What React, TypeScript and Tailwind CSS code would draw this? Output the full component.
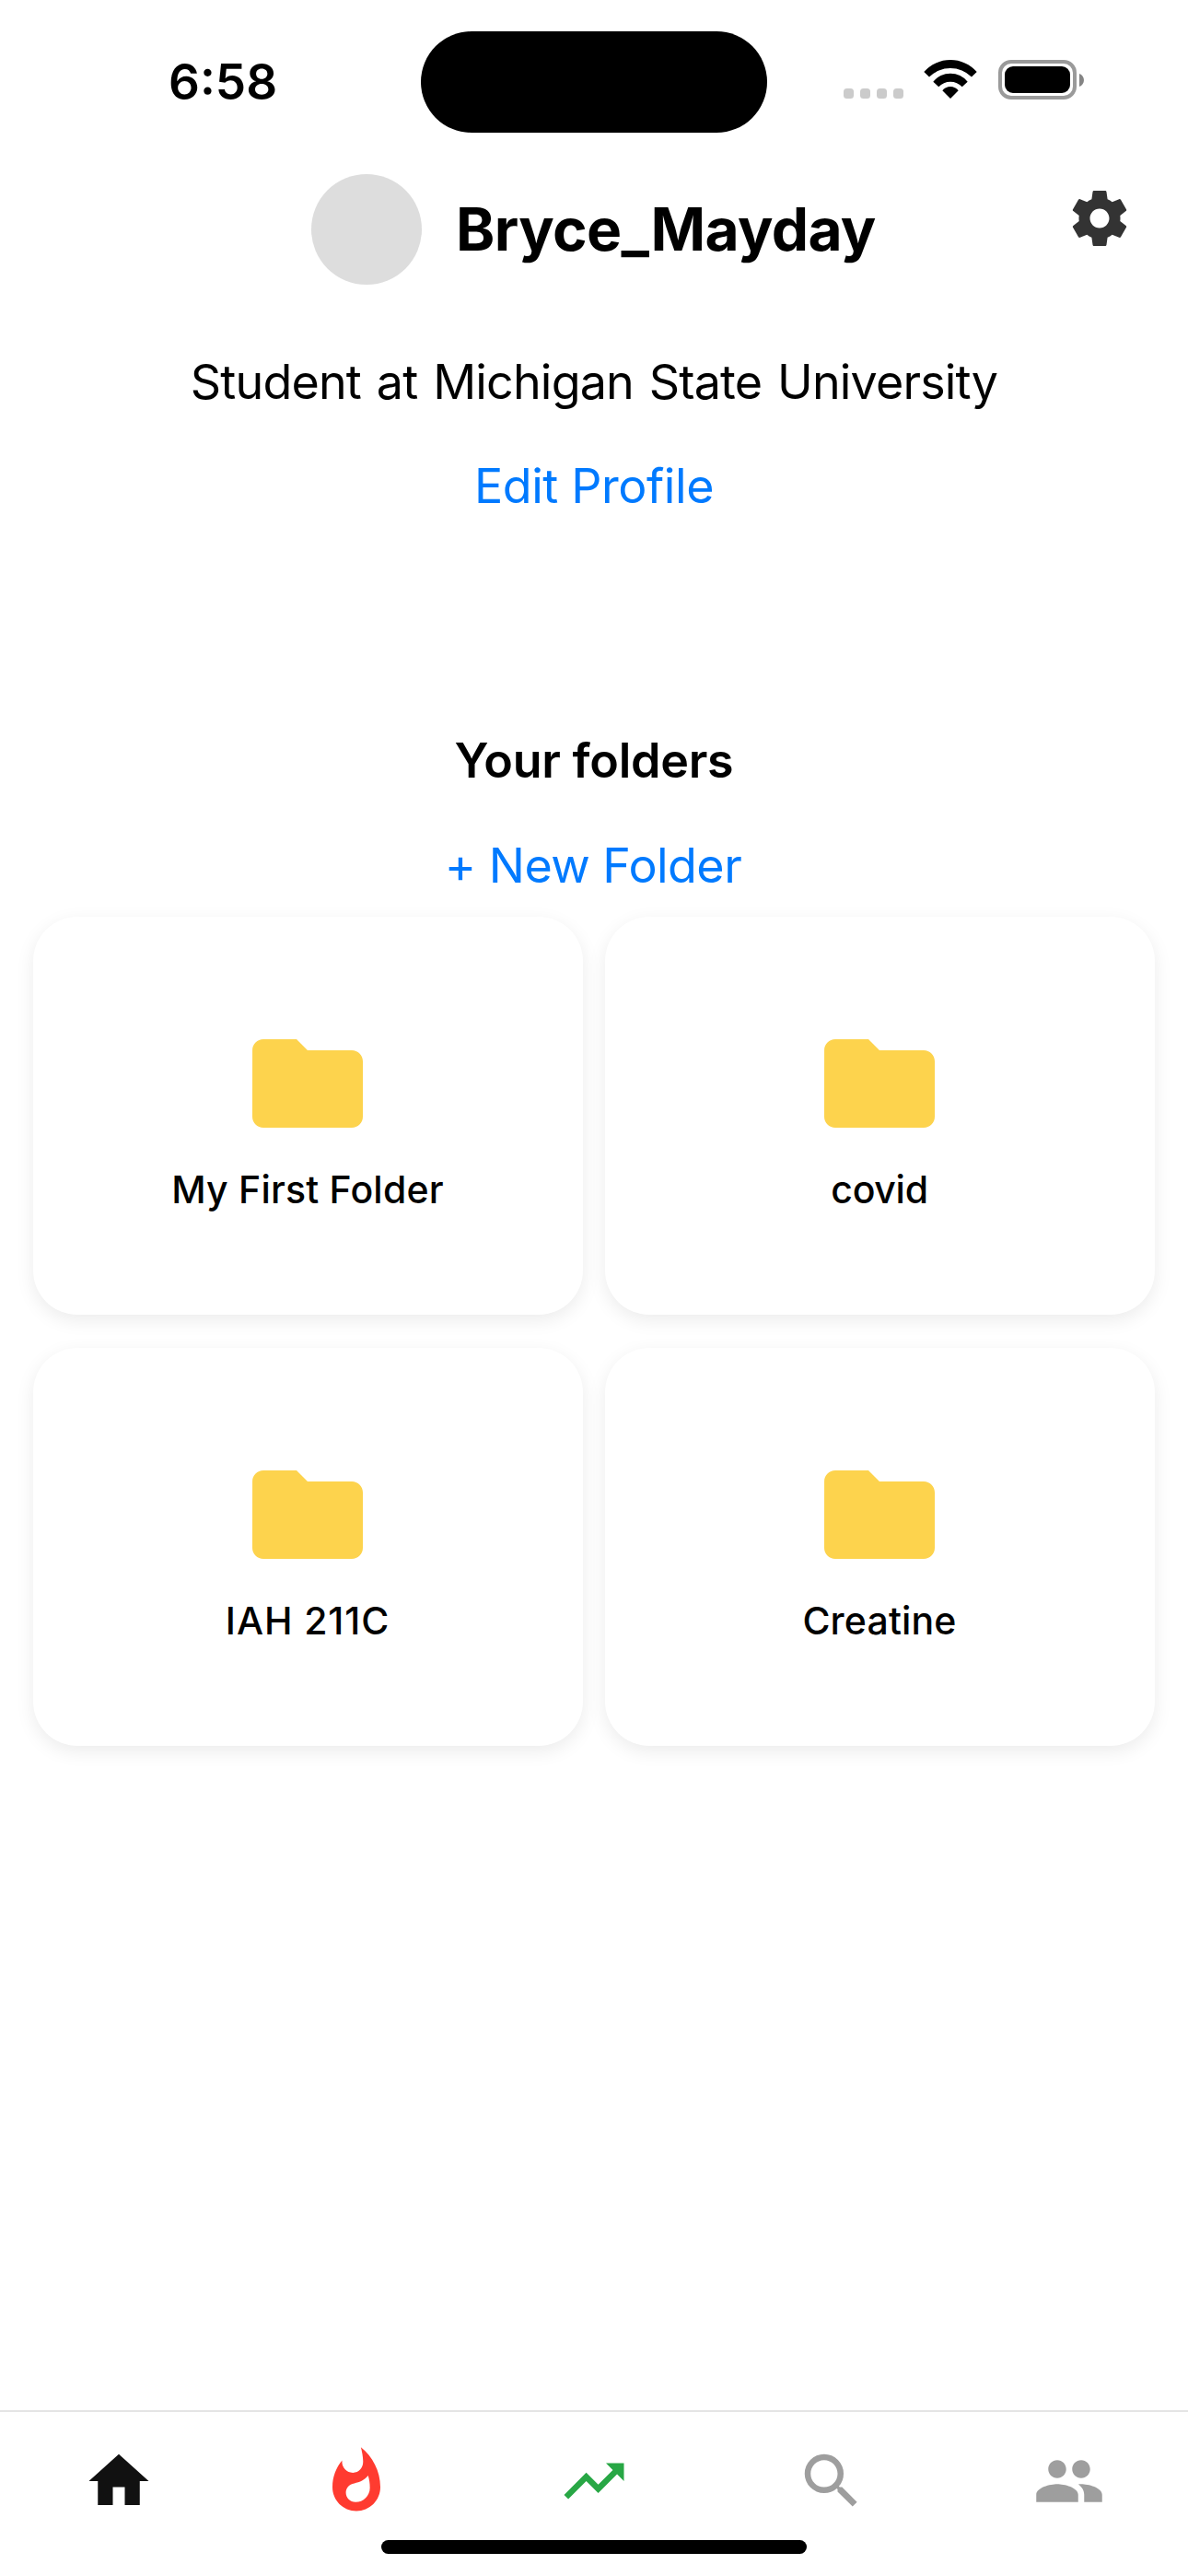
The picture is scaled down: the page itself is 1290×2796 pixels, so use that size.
import type { ReactNode } from 'react';
import { MdFolder, MdHome, MdPeople, MdSearch, MdTrendingUp, MdWhatshot } from 'react-icons/md';

const folders = [
  { name: 'My First Folder', tracking: 'tracking-[0.2px]' },
  { name: 'covid', tracking: 'tracking-[-0.3px]' },
  { name: 'IAH 211C', tracking: 'tracking-[0.9px]' },
  { name: 'Creatine', tracking: 'tracking-[0.16px]' },
];

function WifiIcon() {
  return (
    <svg className="h-[42px] w-[58px]" viewBox="0 0 57.4 42" fill="#000">
      <path d="M0 13A38.2 38.2 0 0 1 57.4 13L51.7 18.5A32.6 32.6 0 0 0 5.7 18.5Z" />
      <path d="M10 23.7A23.9 23.9 0 0 1 47.4 23.7L41.4 29.3A17.2 17.2 0 0 0 16 29.3Z" />
      <path d="M20 33.3A11 11 0 0 1 37.4 33.3L28.7 42Z" />
    </svg>
  );
}

function BatteryIcon() {
  return (
    <div className="flex items-center">
      <div className="h-[43px] w-[85px] rounded-[14px] border-4 border-[#9a9a9a] p-[3px]">
        <div className="h-[29px] w-[71px] rounded-[9px] bg-black" />
      </div>
      <svg className="ml-[3px] h-[14px] w-[5px]" viewBox="0 0 5 14" fill="#848484">
        <path d="M0 0C3 1 5 4 5 7S3 13 0 14Z" />
      </svg>
    </div>
  );
}

function SettingsIcon() {
  return (
    <svg className="size-[72px]" viewBox="0 0 24 24" fill="#333">
      <path d="M19.43 12.98c.04-.32.07-.64.07-.98s-.03-.66-.07-.98l2.11-1.65c.19-.15.24-.42.12-.64l-2-3.46c-.12-.22-.39-.3-.61-.22l-2.49 1c-.52-.4-1.08-.73-1.69-.98l-.38-2.65C14.46 2.18 14.25 2 14 2h-4c-.25 0-.46.18-.49.42l-.38 2.65c-.61.25-1.17.59-1.69.98l-2.49-1c-.23-.09-.49 0-.61.22l-2 3.46c-.13.22-.07.49.12.64l2.11 1.65c-.04.32-.07.65-.07.98s.03.66.07.98l-2.11 1.65c-.19.15-.24.42-.12.64l2 3.46c.12.22.39.3.61.22l2.49-1c.52.4 1.08.73 1.69.98l.38 2.65c.03.24.24.42.49.42h4c.25 0 .46-.18.49-.42l.38-2.65c.61-.25 1.17-.59 1.69-.98l2.49 1c.23.09.49 0 .61-.22l2-3.46c.12-.22.07-.49-.12-.64l-2.11-1.65zM12 15.5c-1.93 0-3.5-1.57-3.5-3.5s1.57-3.5 3.5-3.5 3.5 1.57 3.5 3.5-1.57 3.5-3.5 3.5z" />
    </svg>
  );
}

function StatusBar() {
  return (
    <header className="flex h-[189px] shrink-0 items-start">
      <div className="w-[457px] pt-[59px] pl-[183px] text-[53px] leading-[60px] font-semibold">6:58</div>
      <div className="mt-[34px] h-[110px] w-[376px] rounded-full bg-black" />
      <div className="flex pt-[65px] pl-[83px]">
        <div className="mt-[31px] flex gap-[7px]">
          {[0, 1, 2, 3].map((i) => (
            <div key={i} className="size-[11px] rounded-[3.5px] bg-[#cbcbcb]" />
          ))}
        </div>
        <div className="ml-[22px]">
          <WifiIcon />
        </div>
        <div className="ml-[23px]">
          <BatteryIcon />
        </div>
      </div>
    </header>
  );
}

function FolderCard({ name, tracking }: { name: string; tracking: string }) {
  return (
    <div className="flex h-[432px] flex-col items-center rounded-[48px] bg-white pt-[109px] shadow-[0_6px_20px_rgba(0,0,0,0.08)]">
      <MdFolder className="mr-px size-[144px] text-[#fdd34d]" />
      <div className={`mt-[18px] mr-px text-[41px] leading-[50px] font-medium ${tracking}`}>{name}</div>
    </div>
  );
}

function Tab({ children }: { children: ReactNode }) {
  return <button className="flex justify-center pt-[36px]">{children}</button>;
}

export default function App() {
  return (
    <div className="flex h-[2796px] w-[1290px] flex-col bg-white font-['Inter',sans-serif] text-black">
      <StatusBar />

      <section className="grid h-[120px] shrink-0 grid-cols-[1fr_auto_1fr]">
        <div />
        <div className="flex items-center">
          <div className="size-[120px] rounded-full bg-[#ddd]" />
          <h1 className="ml-[37px] w-[457px] text-[64px] leading-[80px] font-bold tracking-[-0.62px] whitespace-nowrap">
            Bryce_Mayday
          </h1>
        </div>
        <button className="mt-3 mr-[60px] self-start justify-self-end">
          <SettingsIcon />
        </button>
      </section>

      <p className="mt-[73px] text-center text-[52px] leading-[66px] tracking-[-0.83px] [word-spacing:3px]">
        Student at Michigan State University
      </p>
      <button className="mt-[47px] text-center text-[52px] leading-[66px] tracking-[-0.42px] text-[#007aff]">
        Edit Profile
      </button>

      <h2 className="mt-[232px] text-center text-[52px] leading-[66px] font-semibold tracking-[-0.25px]">
        Your folders
      </h2>
      <button className="mt-[48px] pr-0.5 text-center text-[52px] leading-[66px] tracking-[-0.55px] text-[#007aff]">
        + New Folder
      </button>

      <main className="mt-[22px] grid grid-cols-2 gap-x-6 gap-y-9 px-9">
        {folders.map((folder) => (
          <FolderCard key={folder.name} {...folder} />
        ))}
      </main>

      <footer className="mt-auto flex h-[180px] shrink-0 flex-col border-t-2 border-[#e5e5e5]">
        <nav className="grid grid-cols-5">
          <Tab>
            <MdHome className="size-[78px] text-[#111]" />
          </Tab>
          <Tab>
            <MdWhatshot className="size-[78px] text-[#ff3b30]" />
          </Tab>
          <Tab>
            <MdTrendingUp className="size-[78px] text-[#28a745]" />
          </Tab>
          <Tab>
            <MdSearch className="size-[78px] text-[#9e9e9e]" />
          </Tab>
          <Tab>
            <MdPeople className="size-[78px] text-[#9e9e9e]" />
          </Tab>
        </nav>
        <div className="mx-auto mt-[25px] h-[15px] w-[462px] rounded-full bg-black" />
      </footer>
    </div>
  );
}
